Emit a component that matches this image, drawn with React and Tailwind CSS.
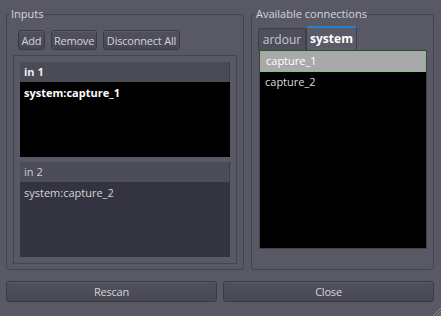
import React, { useState } from 'react';

const font = { fontFamily: '"Open Sans", "DejaVu Sans", sans-serif' };

const Btn = ({ children, className = '' }) => (
  <button
    className={`h-[20px] rounded-[3px] border border-[#393a43] bg-gradient-to-b from-[#50515c] to-[#474853] text-[11px] leading-none tracking-[-0.2px] text-[#d4d4d8] shadow-[inset_0_1px_0_rgba(255,255,255,0.06)] ${className}`}
  >
    {children}
  </button>
);

const PortGroup = ({ name, port, active }) => (
  <div className="flex flex-col">
    <div
      className={`h-[20px] flex items-center pl-[4px] border-r border-[#3d3e48] text-[11px] ${
        active ? 'bg-[#4a4b56] font-bold text-[#ececec]' : 'bg-[#4c4d58] text-[#cfcfd4]'
      }`}
    >
      {name}
    </div>
    <div
      className={`h-[75px] pl-[4px] pt-[3px] text-[11px] ${
        active ? 'bg-black font-bold text-white' : 'bg-[#33343f] text-[#d4d4d8]'
      }`}
    >
      {port}
    </div>
  </div>
);

const Grip = () => (
  <svg width="9" height="9" viewBox="0 0 9 9" className="absolute right-0 bottom-0">
    <path d="M9 1 L1 9 M9 4 L4 9 M9 7 L7 9" stroke="#8a8b96" strokeWidth="1" />
  </svg>
);

export default function App() {
  const [tab, setTab] = useState('system');
  const [sel, setSel] = useState('capture_1');
  const conns = ['capture_1', 'capture_2'];

  return (
    <div style={font} className="relative w-[441px] h-[316px] bg-[#585964] flex flex-col pl-[6px] pr-[7px] pt-[7px] overflow-hidden">
      <div className="flex gap-[7px] h-[263px]">
        <fieldset className="w-[239px] h-full rounded-[3px] border border-[#43444e] px-[6px] pb-[5px] flex flex-col">
          <legend className="-ml-[3px] px-[1px] text-[11px] leading-[14px] text-[#d6d6da]">Inputs</legend>
          <div className="flex gap-[6px] pl-[5px] mt-[9px]">
            <Btn className="w-[27px]">Add</Btn>
            <Btn className="w-[46px]">Remove</Btn>
            <Btn className="w-[77px]">Disconnect All</Btn>
          </div>
          <div className="mt-[5px] flex-1 border border-[#44454f] p-[6px] pb-[6px] flex flex-col gap-[5px]">
            <PortGroup name="in 1" port="system:capture_1" active />
            <PortGroup name="in 2" port="system:capture_2" />
          </div>
        </fieldset>

        <fieldset className="w-[182px] h-full rounded-[3px] border border-[#43444e] px-[6px] flex flex-col">
          <legend className="-ml-[3px] px-[1px] text-[11px] leading-[14px] text-[#d6d6da]">Available connections</legend>
          <div className="flex items-end mt-[5px] h-[24px]">
            <button
              onClick={() => setTab('ardour')}
              className={`w-[48px] h-[22px] rounded-t-[3px] border border-b-0 border-[#3e3f49] text-[12px] pt-[1px] ${
                tab === 'ardour' ? 'bg-[#5a5b67] font-bold text-white' : 'bg-[#4e4f5a] text-[#c9c9ce]'
              }`}
            >
              ardour
            </button>
            <button
              onClick={() => setTab('system')}
              className={`w-[51px] h-[24px] rounded-t-[3px] border border-b-0 border-[#3e3f49] border-t-2 border-t-[#2a7fd0] text-[12px] ${
                tab === 'system' ? 'bg-[#5a5b67] font-bold text-white' : 'bg-[#4e4f5a] text-[#c9c9ce]'
              }`}
            >
              system
            </button>
          </div>
          <div className="h-[199px] w-[168px] ml-[1px] bg-black border border-[#40414b]">
            {conns.map((c) => (
              <div
                key={c}
                onClick={() => setSel(c)}
                className={`h-[21px] flex items-center pl-[5px] text-[11px] ${
                  sel === c ? 'bg-[#a9a9ab] text-white border border-dotted border-[#5fd35f]' : 'text-[#dcdcdc]'
                }`}
              >
                {c}
              </div>
            ))}
          </div>
        </fieldset>
      </div>

      <div className="flex gap-[6px] mt-[11px]">
        <Btn className="flex-1 h-[21px] text-[#d0d0d4]">Rescan</Btn>
        <Btn className="flex-1 h-[21px] text-[#d0d0d4]">Close</Btn>
      </div>
      <Grip />
    </div>
  );
}
